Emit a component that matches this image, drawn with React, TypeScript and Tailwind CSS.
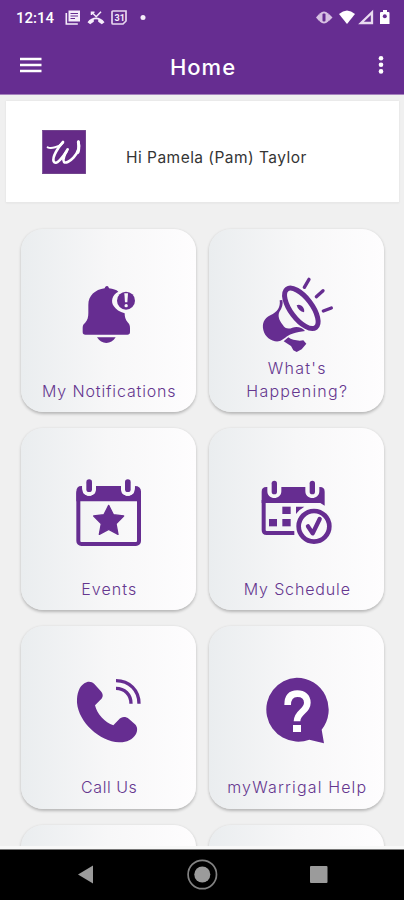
import type { ReactNode } from "react";

const P = "#662d91";

function BellIcon() {
  return (
    <svg viewBox="159 153 273 252" className="h-[84px] w-[91px] shrink-0" fill={P}>
      <path d="M291 198c4 0 5 4 6 7 12 2 22 4 28 10-18 9-24 28-14 43 6 10 18 18 33 22 0 10 2 19 9 27 5 5 7 10 7 17v12q0 8-8 8H226q-8 0-8-8v-12c0-7 2-11 7-15 8-9 10-18 10-30v-24c0-28 20-46 49-50 1-4 3-7 7-7z" />
      <path d="M261 352h56c-7 11-17 17-28 17s-21-6-28-17z" />
      <circle cx="348" cy="242" r="27" />
      <path d="M343 220h11l-2 27h-7z" fill="#f8f8f9" />
      <circle cx="348.500" cy="257" r="5" fill="#f8f8f9" />
    </svg>
  );
}

function MegaphoneIcon() {
  return (
    <svg viewBox="138 153 273 252" className="h-[84px] w-[91px] shrink-0" fill={P}>
      <path d="M224 241C227 262 217 276 196 286C176 296 171 312 175 330C180 352 200 366 221 364C237 359 244 347 262 341C275 336 288 336 300 333C292 322 276 319 262 323C250 328 240 326 233 314C222 300 218 288 223 276C231 264 235 252 232 240z" />
      <path d="M236 364L250 352C260 360 280 364 295 361L304 371L290 388L275 396L265 391L258 378z" />
      <ellipse cx="289" cy="265" rx="72" ry="32" transform="rotate(53 289 265)" fill="none" stroke={P} strokeWidth="15" />
      <path d="M275 256c12-7 26 9 22 21-10-2-19-9-22-21z" />
      <path d="M298 202l14-24M334 230l20-18M355 273l24-9" fill="none" stroke={P} strokeWidth="10" strokeLinecap="round" />
    </svg>
  );
}

function EventsIcon() {
  return (
    <svg viewBox="159 150 273 252" className="h-[84px] w-[91px] shrink-0" fill={P}>
      <rect x="205" y="211" width="182" height="161" rx="9" fill="none" stroke={P} strokeWidth="12" />
      <path d="M199 244v-29q0-17 15-17h3v10c0 26 41 26 41 0v-10h75v10c0 26 41 26 41 0v-10q19 0 19 17v29z" />
      <path d="M217 198v10c0 26 41 26 41 0v-10M333 198v10c0 26 41 26 41 0v-10" fill="#f8f8f9" />
      <rect x="217" y="192" width="41" height="17" fill="#f7f8f8" />
      <rect x="333" y="192" width="41" height="17" fill="#f9f9fa" />
      <rect x="229" y="178" width="17" height="38" rx="8.500" />
      <rect x="345" y="178" width="17" height="38" rx="8.500" />
      <path d="M296 256l14 28 31 4-23 23 6 32-28-15-28 15 6-32-23-23 31-4z" stroke={P} strokeWidth="4" strokeLinejoin="round" />
    </svg>
  );
}

function ScheduleIcon() {
  return (
    <svg viewBox="138 150 273 252" className="h-[84px] w-[91px] shrink-0" fill={P}>
      <path d="M176 240v90q0 9 9 9h83" fill="none" stroke={P} strokeWidth="12" />
      <path d="M170 249v-34q0-14 14-14H345q14 0 14 14v42l-13-8z" />
      <path d="M187 196h42v18c0 27-42 27-42 0zM301 196h42v18c0 27-42 27-42 0z" fill="#f7f7f8" />
      <rect x="200" y="182" width="16" height="41" rx="8" />
      <rect x="314" y="182" width="16" height="41" rx="8" />
      <rect x="232" y="260" width="25" height="22" />
      <path d="M273 260h25l-15 11-10 11z" />
      <rect x="192" y="297" width="24" height="22" />
      <rect x="232" y="297" width="25" height="22" />
      <circle cx="327" cy="319" r="60" fill="#f8f8f9" />
      <circle cx="327" cy="319" r="46" fill="none" stroke={P} strokeWidth="14" />
      <path d="M309 319l14 21 21-43" fill="none" stroke={P} strokeWidth="13" strokeLinecap="round" strokeLinejoin="round" />
    </svg>
  );
}

function CallIcon() {
  return (
    <svg viewBox="159 144 273 252" className="h-[84px] w-[91px] shrink-0" fill={P}>
      <path d="M223 190c10-7 22-6 30 2l19 21c9 10 8 20-2 28l-15 15c6 27 30 52 55 60l16-17c9-10 21-10 31-2l18 16c8 8 8 19 3 29-11 18-30 26-51 25-58-3-121-60-126-119-1-28 7-48 22-58z" />
      <path d="M318 205c25 0 45 18 45 46M318 182c40 0 69 29 69 69" fill="none" stroke={P} strokeWidth="10" />
    </svg>
  );
}

function HelpIcon() {
  return (
    <svg viewBox="138 144 273 252" className="h-[84px] w-[91px] shrink-0" fill={P}>
      <path d="M275 173a96 96 0 0 1 75 156l7 41-44-11a96 96 0 1 1-38-186z" />
      <path d="M248 255c0-23 10-34 29-34 18 0 30 10 30 27 0 27-31 27-31 56" fill="none" stroke="#fff" strokeWidth="20" />
      <rect x="264" y="315" width="24" height="21" fill="#fff" />
    </svg>
  );
}

function Tile({ icon, label, className }: { icon: ReactNode; label: ReactNode; className: string }) {
  return (
    <div className="flex h-[182.5px] flex-col items-center rounded-[22px] bg-linear-to-r from-[#eaedef] via-[#f7f7f8] to-[#fefdfe] pt-[42px] shadow-[0_1.5px_3px_rgba(0,0,0,0.24)]">
      {icon}
      <div className={`mt-auto pl-[1.5px] text-center text-[16px] leading-[23px] font-light whitespace-nowrap text-[#65368f] ${className}`}>{label}</div>
    </div>
  );
}

function StatusBar() {
  return (
    <div className="flex h-9 items-center pl-4 text-white">
      <span className="w-[49px] text-[15px] leading-5 font-medium" style={{ fontFamily: "Roboto, sans-serif" }}>12:14</span>
      <svg viewBox="0 0 85 18" className="h-[18px] w-[85px]" fill="#f5edfa">
        <path d="M3.500 1.500H15v11H3.500z" />
        <path d="M1.300 4v11h11.500" fill="none" stroke="#f5edfa" strokeWidth="1.600" />
        <path d="M5.500 4.500h7.500M5.500 7h7.500M5.500 9.500h4.500" stroke={P} strokeWidth="1.100" />
        <path d="M22.500 13.200c4.500-6.200 12.500-6.200 17 0l-2.700 2-3.600-2.400v-2.200q-2.200-.8-4.400 0v2.200l-3.600 2.400z" />
        <path d="M26.500 6V3.200h3M27 3.500l4.200 4.200 4.800-5" fill="none" stroke="#f5edfa" strokeWidth="1.500" />
        <path d="M48 2h13v10l-3 3H48q-1 0-1-1V3q0-1 1-1z" fill="none" stroke="#e7d7ef" strokeWidth="1.700" />
        <text x="49.500" y="12.300" fontSize="9" fontWeight="700" fontFamily="Roboto, sans-serif">31</text>
        <circle cx="78" cy="8.500" r="2.500" />
      </svg>
      <svg viewBox="0 0 76 18" className="mr-[13px] ml-auto h-[18px] w-[76px]" fill="#fff">
        <path d="M1 8.500l3.500-4v8zM17.500 8.500l-4-4v8z" fill="#d7c1e2" />
        <ellipse cx="9" cy="8.500" rx="5.500" ry="6" fill="#d7c1e2" />
        <rect x="7.500" y="4.500" width="3" height="8" rx="1" fill={P} />
        <path d="M24 5q8-7 16 0l-8 10z" />
        <path d="M46 14L57 3.500V14z" fill="none" stroke="#e9daf0" strokeWidth="2.300" />
        <path d="M66 3h2V1h4v2h1.500q1 0 1 1v11H65V4q0-1 1-1z" />
        <circle cx="69.800" cy="7.300" r="2" fill={P} />
      </svg>
    </div>
  );
}

export default function App() {
  return (
    <main className="flex h-[900px] w-[404px] flex-col overflow-hidden bg-[#f0f0f0]" style={{ fontFamily: "Inter, 'Open Sans', sans-serif" }}>
      <header className="h-[95px] shrink-0 border-b border-[#a582bd] bg-[#662d91]">
        <StatusBar />
        <div className="flex h-[58px] items-center justify-between pr-[19px] pl-5 text-white">
          <svg viewBox="0 0 22 16" className="h-4 w-[22px]" stroke="#fff" strokeWidth="2.300">
            <path d="M0 2h21.500M0 8h21.500M0 14h21.500" />
          </svg>
          <h1 className="mr-[13px] pt-[3px] text-[22px] leading-7 font-medium tracking-[1px]">Home</h1>
          <svg viewBox="0 0 8 20" className="h-5 w-2" fill="#fff">
            <circle cx="4" cy="3.200" r="2.300" />
            <circle cx="4" cy="9.800" r="2.300" />
            <circle cx="4" cy="16.400" r="2.300" />
          </svg>
        </div>
      </header>

      <section className="mr-[5px] ml-[6px] mt-[6px] flex h-[102px] shrink-0 border-b border-[#e8e8e8] bg-white pl-9 shadow-[0_0_2px_#ddd]">
        <svg viewBox="0 0 132 132" className="mt-[29px] h-11 w-11" fill="none" stroke="#fff" strokeLinecap="round" strokeLinejoin="round">
          <rect x="1" y="1" width="130" height="130" fill="#652a87" stroke="#542274" strokeWidth="2" />
          <path d="M17 52c10 5 35-1 45-13" strokeWidth="6" />
          <path d="M63 36C49 51 30 81 35 94c7 14 25-10 38-29" strokeWidth="8" />
          <path d="M77 58C68 72 61 90 66 96c10 9 53-25 43-61" strokeWidth="8" />
          <path d="M109 36c2 12 2 23-1 31" strokeWidth="9" />
        </svg>
        <p className="mt-[46px] ml-10 text-[15.5px] leading-[22px] tracking-[0.470px] whitespace-nowrap text-[#353535]">Hi Pamela (Pam) Taylor</p>
      </section>

      <section className="grid h-[643px] shrink-0 grid-cols-2 content-start gap-x-[13px] gap-y-[16px] overflow-hidden pt-[26px] pr-5 pl-[21px]">
        <Tile icon={<BellIcon />} label="My Notifications" className="pb-[8.5px] tracking-[0.850px]" />
        <Tile icon={<MegaphoneIcon />} label={<>What's<br />Happening?</>} className="pb-[8.5px] tracking-[1.250px]" />
        <Tile icon={<EventsIcon />} label="Events" className="pb-[9.5px] tracking-[1.050px]" />
        <Tile icon={<ScheduleIcon />} label="My Schedule" className="pb-[9.5px] tracking-[0.850px]" />
        <Tile icon={<CallIcon />} label="Call Us" className="pb-[9.5px] tracking-[0.550px]" />
        <Tile icon={<HelpIcon />} label="myWarrigal Help" className="pb-[9.5px] tracking-[1.150px]" />
        <Tile icon={null} label="" className="" />
        <Tile icon={null} label="" className="" />
      </section>
      <div className="h-[3px] shrink-0 bg-[#f8f8f8]" />
      <nav className="h-[51px] shrink-0 border-t border-[#777] bg-black">
        <svg viewBox="0 0 404 50" className="h-[50px] w-[404px]" fill="#9b9b9b">
          <path d="M78 24.500L93 15.500V33.500z" />
          <circle cx="202.300" cy="24.500" r="14.200" fill="none" stroke="#828282" strokeWidth="1.700" />
          <circle cx="202.300" cy="24.500" r="8" />
          <rect x="310" y="16" width="17.500" height="17" rx="1" />
        </svg>
      </nav>
    </main>
  );
}
